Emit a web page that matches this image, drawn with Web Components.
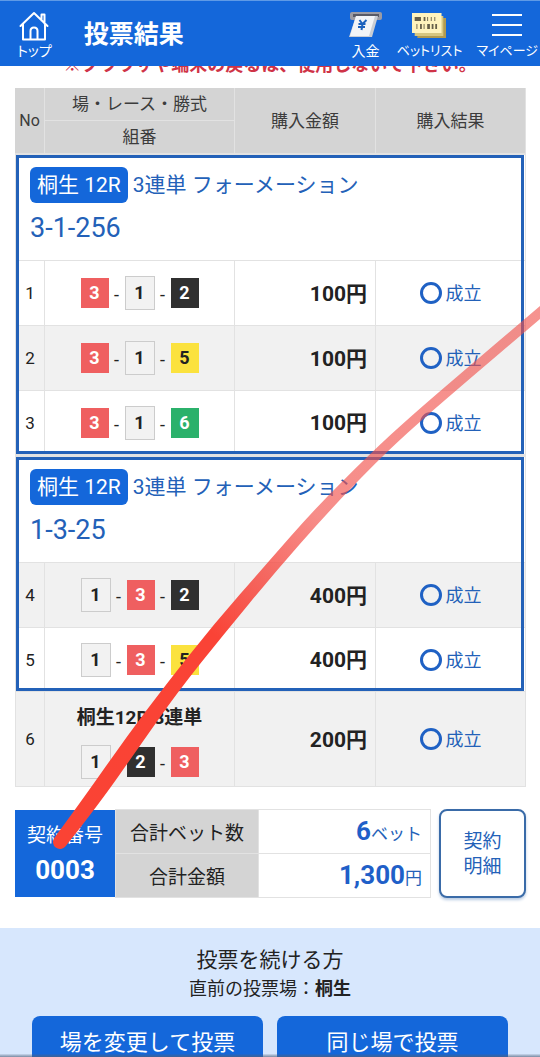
<!DOCTYPE html>
<html lang="ja">
<head>
<meta charset="utf-8">
<meta name="viewport" content="width=device-width, initial-scale=1">
<title>投票結果</title>
<style>
  :root {
    --blue: #1467da;
    --ink-blue: #2361b8;
    --line: #e2e2e2;
    --grey: #d4d4d4;
    --text: #222;
  }
  html, body { margin: 0; height: 100%; }
  body {
    font-family: Roboto, "Noto Sans CJK JP", sans-serif;
    color: var(--text);
    background: #fff;
  }
</style>
</head>
<body>
<vote-app></vote-app>

<script>
const define = (name, html, setup) => {
  const tpl = document.createElement('template');
  tpl.innerHTML = html;
  customElements.define(name, class extends HTMLElement {
    constructor() {
      super();
      this.attachShadow({ mode: 'open' }).append(tpl.content.cloneNode(true));
    }
    connectedCallback() { if (setup) setup(this, this.shadowRoot); }
  });
};

/* Icon with its caption in the header bar */
define('nav-item', `
  <style>
    :host { display: block; }
    a { display: flex; flex-direction: column; align-items: center; color: #fff; text-decoration: none;
        font-size: 14px; line-height: 20px; white-space: nowrap; font-feature-settings: "palt"; }
    :host([small]) a { font-size: 13px; }
    ::slotted(svg) { display: block; width: 34px; height: 30px; }
  </style>
  <a href="#"><slot name="icon"></slot><slot></slot></a>`);

define('app-header', `
  <style>
    :host { display: block; }
    header { display: flex; align-items: flex-start; box-sizing: border-box; height: 66px; padding: 10px 2px 0 17px;
             background: var(--blue); border-top: 1px solid #5f9ae6; color: #fff; }
    h1 { flex: 1; margin: 8px 0 0 32px; font-size: 25px; line-height: 32px; font-weight: 700; }
    nav { display: flex; gap: 14px; }
  </style>
  <header>
    <nav-item>
      <svg slot="icon" viewBox="0 0 34 30" fill="none" stroke="#fff" stroke-width="2" stroke-linecap="round" stroke-linejoin="round">
        <path d="M3.500 15 17 2 30.500 15M6 13v15.500h22V13M24.500 9.500V3.500h3v9M13.500 28v-8q0-3.500 3.500-3.500t3.500 3.500v8"/>
      </svg>トップ
    </nav-item>
    <h1>投票結果</h1>
    <nav>
      <nav-item>
        <svg slot="icon" viewBox="0 0 34 30">
          <rect x="1" y="1" width="32" height="8" rx="2" fill="#9b9ba4"/>
          <rect x="4" y="3" width="26" height="3" fill="#585a66"/>
          <path d="M7 5h22L23 26H0Z" fill="#c9cdd4"/>
          <path d="M7 5h19L20 25H1Z" fill="#f2f4f7"/>
          <path d="m10.500 9 3 4 4-4M13.500 13l-1 6M9.500 13h7M9 16h7" fill="none" stroke="#1b61bd" stroke-width="2"/>
        </svg>入金
      </nav-item>
      <nav-item small>
        <svg slot="icon" viewBox="0 0 38 30" preserveAspectRatio="none">
          <path d="M6 7h32v20H6Z" fill="#b29b50"/>
          <path d="M3 5h32v20H3Z" fill="#d8c780"/>
          <path d="M0 2h33v20H0Z" fill="#fff3bd"/>
          <path d="M3 6h7v4H3ZM13 6h2v4h-2ZM17 6h1v4h-1ZM21 6h1v4h-1ZM25 6h1v4h-1ZM5 13h1v5H5ZM9 13h2v5H9ZM13 13h1v5h-1ZM17 13h3v5h-3ZM22 13h2v5h-2ZM26 13h2v5h-2Z" fill="#665f49"/>
        </svg>ベットリスト
      </nav-item>
      <nav-item small>
        <svg slot="icon" viewBox="0 0 34 30" stroke="#fff" stroke-width="2"><path d="M2 4h30M2 14h30M2 24h30"/></svg>マイページ
      </nav-item>
    </nav>
  </header>`);

/* Coloured boat numbers joined by dashes: <boat-combo boats="3-1-2"> */
define('boat-combo', `
  <style>
    :host { display: flex; justify-content: center; align-items: center; }
    b { box-sizing: border-box; width: 28px; height: 30px; font-size: 18px; line-height: 30px; text-align: center; color: #fff; }
    i { width: 16px; font-style: normal; font-size: 18px; line-height: 30px; text-align: center; padding-top: 4px; }
    .n1 { width: 30px; height: 34px; line-height: 32px; border: 1px solid #ccc; background: #f2f2f2; color: #222; }
    .n2 { background: #303030; }
    .n3 { background: #ef5f60; }
    .n5 { background: #fbe23e; color: #222; }
    .n6 { background: #2bb16b; }
  </style>`, (host, root) => {
  host.getAttribute('boats').split('-').forEach((n, i) => {
    if (i) root.append(Object.assign(document.createElement('i'), { textContent: '-' }));
    root.append(Object.assign(document.createElement('b'), { textContent: n, className: 'n' + n }));
  });
});

define('result-mark', `
  <style>
    :host { display: flex; justify-content: center; align-items: center; gap: 4px; color: var(--ink-blue); font-size: 18px; line-height: 24px; }
    span { box-sizing: border-box; width: 22px; height: 22px; border: 3px solid #1f61c4; border-radius: 50%; }
    div { padding-top: 2px; }
  </style>
  <span></span><div><slot></slot></div>`);

/* Race badge, bet type and the picked numbers above a group of bets */
define('group-title', `
  <style>
    :host { display: block; color: var(--ink-blue); font-size: 21px; font-weight: 400; text-align: left; }
    div { display: flex; gap: 5px; line-height: 36px; white-space: nowrap; }
    .race { padding: 0 7px; border-radius: 6px; background: var(--blue); color: #fff; }
    p { margin: 9px 0 0; font-size: 27px; line-height: 32px; }
  </style>
  <div><span class="race"><slot name="race"></slot></span><slot></slot></div>
  <p><slot name="picks"></slot></p>`);

define('vote-table', `
  <style>
    :host { display: block; }
    table { width: 100%; table-layout: fixed; border-collapse: separate; border-spacing: 0; }
    .no { width: 30px; } .amount { width: 141px; } .result { width: 150px; }
    th, td { box-sizing: border-box; padding: 0; border: 0 solid var(--line); border-width: 0 1px 1px 0; text-align: center; }
    thead th { height: 33px; background: var(--grey); font-size: 17px; line-height: 24px; font-weight: 400; color: #3c3c3c; }
    thead tr:first-child th:first-child { font-size: 16px; }
    tbody tr > * { height: 65px; }
    tbody tr > :first-child { border-left-width: 1px; font-size: 17px; font-weight: 400; }
    tbody tr.alt > * { background: #f1f1f1; }
    tbody td.yen { padding: 0 8px 3px 0; text-align: right; font-size: 21px; font-weight: 700; }
    .group { position: relative; }
    .group::after { content: ""; position: absolute; inset: 1px 2px 1px 1px; border: 3px solid var(--ink-blue); pointer-events: none; }
    .group + .group::after { top: 2px; }
    .group tr:first-child th { height: 107px; padding: 12px 14px 15px; border-top-width: 1px; vertical-align: top; }
    .group + .group tr:first-child th { height: 108px; border-top-width: 2px; }
    .group tr:last-child > * { height: 64px; }
    .single tr > * { height: 95px; }
    .single strong { display: block; margin: 4px 0 13px; font-size: 19px; line-height: 28px; }
  </style>
  <table>
    <colgroup><col class="no"><col><col class="amount"><col class="result"></colgroup>
    <thead>
      <tr><th scope="col" rowspan="2">No</th><th scope="col">場・レース・勝式</th><th scope="col" rowspan="2">購入金額</th><th scope="col" rowspan="2">購入結果</th></tr>
      <tr><th scope="col">組番</th></tr>
    </thead>
    <tbody class="group">
      <tr><th colspan="4"><group-title><span slot="race">桐生 12R</span>3連単 フォーメーション<span slot="picks">3-1-256</span></group-title></th></tr>
      <tr><td>1</td><td><boat-combo boats="3-1-2"></boat-combo></td><td class="yen">100円</td><td><result-mark>成立</result-mark></td></tr>
      <tr class="alt"><td>2</td><td><boat-combo boats="3-1-5"></boat-combo></td><td class="yen">100円</td><td><result-mark>成立</result-mark></td></tr>
      <tr><td>3</td><td><boat-combo boats="3-1-6"></boat-combo></td><td class="yen">100円</td><td><result-mark>成立</result-mark></td></tr>
    </tbody>
    <tbody class="group">
      <tr><th colspan="4"><group-title><span slot="race">桐生 12R</span>3連単 フォーメーション<span slot="picks">1-3-25</span></group-title></th></tr>
      <tr class="alt"><td>4</td><td><boat-combo boats="1-3-2"></boat-combo></td><td class="yen">400円</td><td><result-mark>成立</result-mark></td></tr>
      <tr><td>5</td><td><boat-combo boats="1-3-5"></boat-combo></td><td class="yen">400円</td><td><result-mark>成立</result-mark></td></tr>
    </tbody>
    <tbody class="single">
      <tr class="alt"><td>6</td><td><strong>桐生12R 3連単</strong><boat-combo boats="1-2-3"></boat-combo></td><td class="yen">200円</td><td><result-mark>成立</result-mark></td></tr>
    </tbody>
  </table>`);

define('contract-summary', `
  <style>
    :host { display: flex; gap: 8px; font-size: 19px; }
    .number { display: flex; flex-direction: column; justify-content: center; width: 100px; margin: 1px 0; background: var(--blue); color: #fff; text-align: center; line-height: 32px; }
    .number b { font-size: 26px; line-height: 36px; }
    .totals { display: flex; flex: 1; }
    table { flex: 1; border-collapse: separate; border-spacing: 0; }
    th, td { box-sizing: border-box; height: 44px; padding: 0; border: 0 solid var(--line); border-bottom-width: 1px; }
    tr:first-child > * { height: 45px; border-top-width: 1px; }
    th { width: 144px; border-width: 0 1px 1px; background: var(--grey); font-weight: 400; }
    td { padding: 2px 8px 0 0; border-right-width: 1px; text-align: right; color: var(--ink-blue); font-size: 17px; line-height: 32px; }
    td b { font-size: 26px; color: #1f5fc8; }
    button { width: 87px; padding: 0; border: 2px solid #3a6ba8; border-radius: 8px; background: #fff; box-shadow: 0 2px 3px #b9cbe2;
             color: var(--ink-blue); font: inherit; line-height: 25px; }
  </style>
  <div class="totals">
    <div class="number">契約番号<b>0003</b></div>
    <table>
      <tr><th scope="row">合計ベット数</th><td><b>6</b>ベット</td></tr>
      <tr><th scope="row">合計金額</th><td><b>1,300</b>円</td></tr>
    </table>
  </div>
  <button type="button">契約<br>明細</button>`);

define('continue-panel', `
  <style>
    :host { display: block; padding: 17px 32px 32px; background: #d7e7fd; text-align: center; }
    h2 { margin: 0; font-size: 21px; line-height: 30px; font-weight: 400; }
    p { margin: 0 0 13px; font-size: 18px; line-height: 28px; }
    div { display: flex; gap: 14px; }
    button { flex: 1; height: 50px; padding: 0 0 3px; border: 0; border-radius: 8px; background: var(--blue); color: #fff; font: inherit; font-size: 22px; }
  </style>
  <h2>投票を続ける方</h2>
  <p>直前の投票場：<b>桐生</b></p>
  <div><button type="button">場を変更して投票</button><button type="button">同じ場で投票</button></div>`);

/* Freehand marker line laid over the page; it thins and fades towards its end */
define('pen-stroke', `
  <style>
    :host { position: absolute; top: 0; left: 0; width: 540px; height: 900px; max-width: 100%; overflow: hidden; pointer-events: none; }
    svg { display: block; width: 540px; height: 900px; }
  </style>
  <svg viewBox="0 0 540 900" aria-hidden="true">
    <defs><linearGradient id="fade" gradientUnits="userSpaceOnUse" x1="60" y1="842" x2="540" y2="312">
      <stop offset="0" stop-color="#fa4334"/><stop offset=".36" stop-color="#fa4336"/>
      <stop offset=".45" stop-color="#f6483f" stop-opacity=".85"/><stop offset=".58" stop-color="#f2504a" stop-opacity=".65"/>
      <stop offset="1" stop-color="#f0504a" stop-opacity=".62"/>
    </linearGradient></defs>
    <path fill="url(#fade)"/>
  </svg>`, (host, root) => {
  const pts = [[60,842,7],[92,800,8],[132,743,8],[172,688,7],[219,629,7],[270,569,6],[320,512,6],[374,457,5],[413,421,5],[470,372,5],[523,327,5],[550,304,5]];
  const side = s => pts.map(([x, y, w], i) => {
    const a = pts[Math.max(i - 1, 0)], b = pts[Math.min(i + 1, pts.length - 1)];
    const dx = b[0] - a[0], dy = b[1] - a[1], l = Math.hypot(dx, dy);
    return [x - s * dy / l * w, y + s * dx / l * w];
  });
  const curve = p => p.slice(1).map((q, i) => {
    const mid = i < p.length - 2 ? [(q[0] + p[i + 2][0]) / 2, (q[1] + p[i + 2][1]) / 2] : q;
    return `Q${q} ${mid}`;
  }).join('');
  const r = side(1), l = side(-1).reverse();
  root.querySelector('path').setAttribute('d', `M${r[0]}${curve(r)}L${l[0]}${curve(l)}A7 7 0 0 0 ${r[0]}Z`);
});

define('vote-app', `
  <style>
    :host { position: relative; display: flex; flex-direction: column; height: 100%; overflow: hidden; }
    app-header { position: relative; z-index: 1; }
    main { flex: 1; min-height: 0; overflow-y: auto; scrollbar-width: none; }
    .notice { margin: -10px 0 14px; text-align: center; font-size: 18px; line-height: 18px; font-weight: 700; color: #cf3347; white-space: nowrap; }
    vote-table { margin: 0 14px 0 15px; }
    contract-summary { margin: 22px 14px 30px 15px; }
    .edge { position: absolute; left: 0; right: 0; bottom: 0; height: 3px; background: linear-gradient(#5060781a, #506078b0); }
  </style>
  <app-header></app-header>
  <main>
    <p class="notice">※ブラウザや端末の戻るは、使用しないで下さい。</p>
    <vote-table></vote-table>
    <contract-summary></contract-summary>
    <continue-panel></continue-panel>
  </main>
  <pen-stroke></pen-stroke>
  <div class="edge"></div>`);
</script>
</body>
</html>
